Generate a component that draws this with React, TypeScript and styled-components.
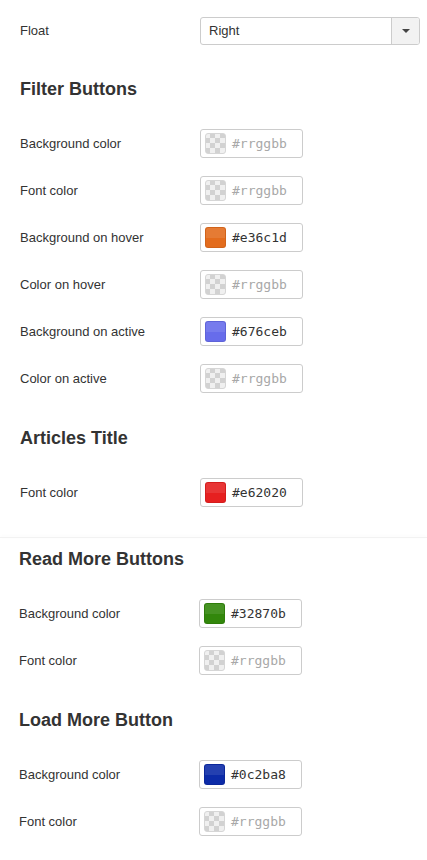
import React from "react";
import styled, { createGlobalStyle } from "styled-components";

const Global = createGlobalStyle`
  html, body { margin: 0; padding: 0; background: #fff; }
  body { font-family: "Liberation Sans", Arial, sans-serif; color: #333; }
`;

const Page = styled.div`
  width: 427px;
  padding-top: 7px;
  padding-bottom: 16px;
`;

const Panel = styled.div<{ $inset: number }>`
  padding-left: ${(p) => p.$inset}px;
  padding-right: 8px;
`;

const Divider = styled.div`
  margin-top: 21px;
  height: 1px;
  background: #f2f2f2;
  box-shadow: 0 -1px 3px rgba(0, 0, 0, 0.04);
`;

const Heading = styled.h3<{ $top: number }>`
  margin: ${(p) => p.$top}px 0 19px 0;
  font-size: 18px;
  line-height: 24px;
  font-weight: bold;
  color: #333;
`;

const Row = styled.div`
  display: grid;
  grid-template-columns: 180px auto;
  align-items: center;
  height: 47px;
`;

const Label = styled.div`
  font-size: 13px;
  color: #333;
`;

const Select = styled.div`
  display: flex;
  width: 220px;
  height: 28px;
  box-sizing: border-box;
  border: 1px solid #ccc;
  border-radius: 3px;
  overflow: hidden;
`;

const SelectValue = styled.div`
  flex: 1;
  display: flex;
  align-items: center;
  padding-left: 8px;
  font-size: 13px;
  color: #333;
`;

const SelectButton = styled.div`
  width: 27px;
  border-left: 1px solid #ccc;
  background: #f2f2f2;
  display: flex;
  align-items: center;
  justify-content: center;
`;

const Caret = styled.div`
  width: 0;
  height: 0;
  border-left: 4px solid transparent;
  border-right: 4px solid transparent;
  border-top: 4px solid #444;
`;

const ColorBox = styled.div`
  display: flex;
  align-items: center;
  width: 103px;
  height: 29px;
  box-sizing: border-box;
  border: 1px solid #ccc;
  border-radius: 3px;
  padding-left: 4px;
  gap: 6px;
`;

const Swatch = styled.div<{ $color?: string }>`
  position: relative;
  width: 21px;
  height: 21px;
  box-sizing: border-box;
  border-radius: 3px;
  overflow: hidden;
  ${(p) =>
    p.$color
      ? `background: ${p.$color}; border: 1px solid rgba(0,0,0,0.08);`
      : `background-color: #f0f0f0;
         border: 1px solid #d6d6d6;
         background-image:
           linear-gradient(45deg, #d2d2d2 25%, transparent 25%, transparent 75%, #d2d2d2 75%),
           linear-gradient(45deg, #d2d2d2 25%, transparent 25%, transparent 75%, #d2d2d2 75%);
         background-size: 10px 10px;
         background-position: -1px -1px, 4px 4px;`}
  &::after {
    content: "";
    display: ${(p) => (p.$color ? "block" : "none")};
    position: absolute;
    left: 0;
    right: 0;
    top: 0;
    height: 50%;
    background: rgba(255, 255, 255, 0.1);
  }
`;

const Hex = styled.span<{ $empty: boolean }>`
  font-family: "DejaVu Sans Mono", "Liberation Mono", monospace;
  font-size: 13px;
  color: ${(p) => (p.$empty ? "#a8a8a8" : "#333")};
`;

type Field = { label: string; color?: string };

const ColorField = ({ label, color }: Field) => (
  <Row>
    <Label>{label}</Label>
    <ColorBox>
      <Swatch $color={color} />
      <Hex $empty={!color}>{color ?? "#rrggbb"}</Hex>
    </ColorBox>
  </Row>
);

const filterFields: Field[] = [
  { label: "Background color" },
  { label: "Font color" },
  { label: "Background on hover", color: "#e36c1d" },
  { label: "Color on hover" },
  { label: "Background on active", color: "#676ceb" },
  { label: "Color on active" },
];

export default function App() {
  return (
    <Page>
      <Global />
      <Panel $inset={20}>
        <Row>
          <Label>Float</Label>
          <Select>
            <SelectValue>Right</SelectValue>
            <SelectButton>
              <Caret />
            </SelectButton>
          </Select>
        </Row>
        <Heading $top={23}>Filter Buttons</Heading>
        {filterFields.map((f) => (
          <ColorField key={f.label} {...f} />
        ))}
        <Heading $top={24}>Articles Title</Heading>
        <ColorField label="Font color" color="#e62020" />
      </Panel>
      <Divider />
      <Panel $inset={19}>
        <Heading $top={9}>Read More Buttons</Heading>
        <ColorField label="Background color" color="#32870b" />
        <ColorField label="Font color" />
        <Heading $top={24}>Load More Button</Heading>
        <ColorField label="Background color" color="#0c2ba8" />
        <ColorField label="Font color" />
      </Panel>
    </Page>
  );
}
